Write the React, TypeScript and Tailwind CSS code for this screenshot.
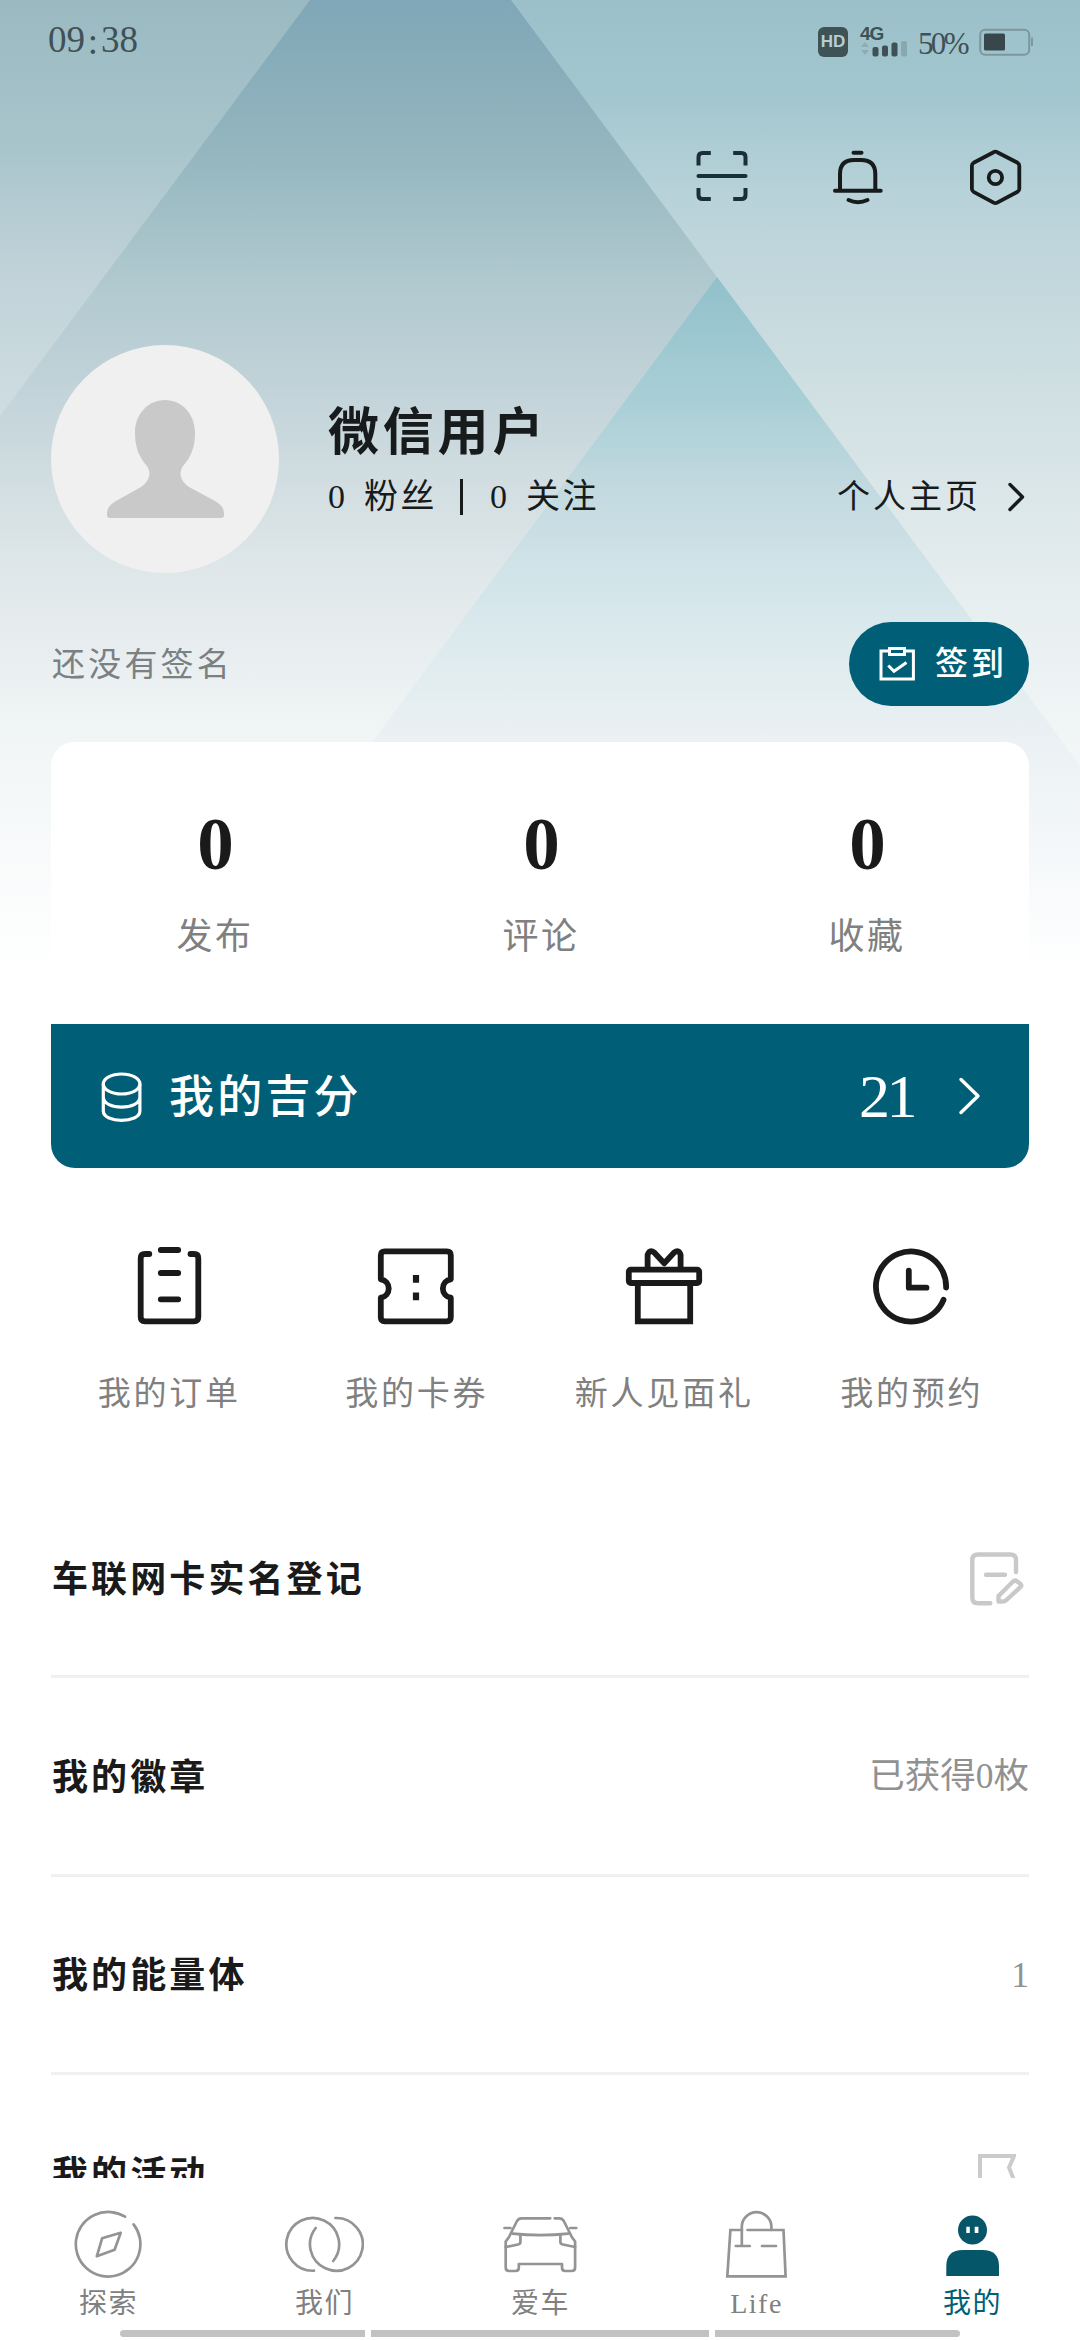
import type { ReactNode } from 'react'

interface Shortcut {
    label: string
    icon: ReactNode
}

interface MenuItem {
    label: string
    value: ReactNode
}

interface Tab {
    label: string
    icon: ReactNode
    active?: boolean
}

const stats = [
    { label: '发布', count: 0 },
    { label: '评论', count: 0 },
    { label: '收藏', count: 0 },
]

const shortcuts: Shortcut[] = [
    {
        label: '我的订单',
        icon: (
            <>
                <path d="M20.3 8H16Q11.7 8 11.7 12.3V71Q11.7 75.3 16 75.3H65Q69.3 75.3 69.3 71V12.3Q69.3 8 65 8H61.5" />
                <path d="M31.8 4H49.2M31.8 27H49.2M31.8 53.3H49.2" />
            </>
        ),
    },
    {
        label: '我的卡券',
        icon: (
            <>
                <path d="M4.8 33.3V9.3Q4.8 5.3 8.8 5.3H70.8Q74.8 5.3 74.8 9.3V33.3A9.3 9.3 0 0 0 74.8 51.7V71.3Q74.8 75.3 70.8 75.3H8.8Q4.8 75.3 4.8 71.3V51.7A9.3 9.3 0 0 0 4.8 33.3Z" />
                <path d="M40 29V36.8M40 46.4V54.2" strokeWidth="6.2" strokeLinecap="butt" />
            </>
        ),
    },
    {
        label: '新人见面礼',
        icon: (
            <>
                <rect x="4.8" y="23.7" width="70.4" height="13.3" rx="2" />
                <path d="M13.8 37V75.3H66.2V37" strokeLinecap="butt" strokeLinejoin="miter" />
                <path d="M23.6 23V9Q25.5 3 30 6.3L40.2 17.3L50.4 6.3Q55 3 56.6 9V23" />
            </>
        ),
    },
    {
        label: '我的预约',
        icon: (
            <>
                <path d="M75.1 41.5A35.1 35.1 0 1 0 72.5 53.8" />
                <path d="M37.8 24.7V41.7H55.5" />
            </>
        ),
    },
]

const menu: MenuItem[] = [
    {
        label: '车联网卡实名登记',
        value: (
            <svg className="mr-[3px] h-[60px] w-[60px]" viewBox="0 0 60 60" fill="none" stroke="#c9c9c9" strokeWidth="4.4" strokeLinecap="round" strokeLinejoin="round">
                <path d="M50 23V11Q50 5.5 44.5 5.5H12Q6.3 5.5 6.3 11V48.5Q6.3 54.3 12 54.3H24.3" />
                <path d="M20 25.7H39" />
                <path d="M32.5 52.5V47L46.5 33Q49 30.5 51.3 32.5L54.5 35Q56 36.5 54.3 38.2L40.5 51Q39 52.5 37 52.5Z" />
            </svg>
        ),
    },
    { label: '我的徽章', value: <span>已获得0枚</span> },
    { label: '我的能量体', value: <span>1</span> },
    {
        label: '我的活动',
        value: (
            <svg className="mt-2 mr-[13px] h-[52px] w-10" viewBox="0 0 40 52" fill="none" stroke="#cbcbcb" strokeWidth="4">
                <path d="M4 50V4H38L33 15.5L38 28H4" />
            </svg>
        ),
    },
]

const tabs: Tab[] = [
    {
        label: '探索',
        icon: (
            <>
                <path d="M57 6.7A32.3 32.3 0 1 0 65.6 14.4" />
                <path d="M52.7 22.7L34.1 28.3L28.8 46.3L46.6 39.7Z" />
            </>
        ),
    },
    {
        label: '我们',
        icon: (
            <>
                <path d="M30 60.7A26.4 26.4 0 1 1 49.2 51" />
                <path d="M51.4 8A26.4 26.4 0 1 1 31.7 18" />
            </>
        ),
    },
    {
        label: '爱车',
        icon: (
            <>
                <path d="M50.2 8.3H21.5Q18.5 8.3 17 11L9 27L5.7 31.5V57.5Q5.7 61 9.2 61H15.6Q18.8 61 18.8 57.5V54H62V57.5Q62 61 65.3 61H71.6Q75.1 61 75.1 57.5V31.5L71.8 27L63.8 11Q62.3 8.3 59.3 8.3H54.7" />
                <path d="M12.5 23.7Q40.4 26.7 68.3 23.7M4.5 18H10.5M70.3 18H76.3" />
                <path d="M20.4 25V32Q20.4 34 18 34.5L5.7 37M60.4 25V32Q60.4 34 62.8 34.5L75.1 37" />
            </>
        ),
    },
    {
        label: 'Life',
        icon: (
            <>
                <path d="M26 20H14.4L11.3 66.3H69.6L67.5 20H31.5" strokeLinejoin="miter" />
                <path d="M25.8 35.5V17A14.8 14.8 0 0 1 55.4 17V20M19.8 36H33.8M46 36H60" />
            </>
        ),
    },
    {
        label: '我的',
        active: true,
        icon: (
            <g fill="#06566a" stroke="none">
                <circle cx="40.5" cy="20" r="14.5" />
                <path d="M14.3 66V56Q14.3 40 31 40H50.4Q67 40 67 56V66Z" />
                <path d="M34.3 16.7H37.8V23H34.3ZM42.7 16.7H46.4V23H42.7Z" fill="#fff" />
            </g>
        ),
    },
]

function Backdrop() {
    return (
        <svg className="absolute top-0 left-0 h-[970px] w-[1080px]" viewBox="0 0 1080 970">
            <defs>
                <linearGradient id="sky" gradientUnits="userSpaceOnUse" x1="0" y1="0" x2="0" y2="970">
                    <stop offset="0" stopColor="#9bc0c9" />
                    <stop offset="0.1" stopColor="#a3c7cf" />
                    <stop offset="0.2" stopColor="#b8d2d9" />
                    <stop offset="0.4" stopColor="#cfdfe2" />
                    <stop offset="0.6" stopColor="#e5edee" />
                    <stop offset="0.77" stopColor="#f2f6f7" />
                    <stop offset="1" stopColor="#ffffff" />
                </linearGradient>
                <linearGradient id="left" gradientUnits="userSpaceOnUse" x1="0" y1="0" x2="0" y2="430">
                    <stop offset="0" stopColor="#9ab9c1" />
                    <stop offset="0.35" stopColor="#a9c5cc" />
                    <stop offset="0.65" stopColor="#c1d3d9" />
                    <stop offset="1" stopColor="#d0dee2" />
                </linearGradient>
                <linearGradient id="peak" gradientUnits="userSpaceOnUse" x1="0" y1="0" x2="0" y2="970">
                    <stop offset="0" stopColor="#7fa7b7" />
                    <stop offset="0.15" stopColor="#93b5be" />
                    <stop offset="0.29" stopColor="#b0c9cf" />
                    <stop offset="0.41" stopColor="#c3d4da" />
                    <stop offset="0.52" stopColor="#d5e0e3" />
                    <stop offset="0.62" stopColor="#e3eaec" />
                    <stop offset="0.77" stopColor="#f2f6f7" />
                    <stop offset="1" stopColor="#ffffff" />
                </linearGradient>
                <linearGradient id="foothill" gradientUnits="userSpaceOnUse" x1="0" y1="277" x2="0" y2="970">
                    <stop offset="0" stopColor="#91c0cb" />
                    <stop offset="0.18" stopColor="#a9cfd6" />
                    <stop offset="0.3" stopColor="#c1d9df" />
                    <stop offset="0.42" stopColor="#d0e3e8" />
                    <stop offset="0.54" stopColor="#deebee" />
                    <stop offset="0.67" stopColor="#ebf1f4" />
                    <stop offset="1" stopColor="#ffffff" />
                </linearGradient>
            </defs>
            <rect width="1080" height="970" fill="url(#sky)" />
            <path d="M0 0H310L0 416Z" fill="url(#left)" />
            <path d="M310 0H511L1232 970H0V416Z" fill="url(#peak)" />
            <path d="M717 277L1232 970H203Z" fill="url(#foothill)" />
        </svg>
    )
}

function StatusBar() {
    return (
        <div className="relative flex h-21 shrink-0 items-center justify-between pr-12 pl-12 text-[#3f5156]">
            <div className="-mt-1 flex text-[37px] leading-none">
                <span>09</span>
                <span className="w-4 pt-0.5 text-center">:</span>
                <span>38</span>
            </div>
            <div className="flex items-center">
                <div className="flex h-[30px] w-[30px] items-center justify-center rounded-md bg-[#3f5357] font-['Liberation_Sans'] text-[17px] font-bold text-[#b4cfd4]">
                    HD
                </div>
                <div className="ml-3 flex h-8 w-[48px] flex-col">
                    <span className="h-[15px] font-['Liberation_Sans'] text-[19px] leading-[16px] font-bold tracking-[-1px]">4G</span>
                    <svg className="h-[17px] w-12" viewBox="0 0 48 17">
                        <path d="M1 6L5 1L9 6ZM1 9L5 14L9 9Z" fill="#8eacb2" />
                        <rect x="12.5" y="6" width="6" height="9.5" rx="2" fill="#3f5156" />
                        <rect x="22" y="4.5" width="6" height="11" rx="2" fill="#3f5156" />
                        <rect x="31.5" y="1.5" width="6" height="14" rx="2" fill="#3f5156" />
                        <rect x="41" y="0" width="6" height="15.5" rx="2" fill="#87a8ae" />
                    </svg>
                </div>
                <span className="ml-2.5 pt-0.5 text-[31px] leading-none tracking-[-2.6px]">50%</span>
                <svg className="-mr-0.5 ml-3 h-7 w-[55px]" viewBox="0 0 55 28" fill="none">
                    <rect x="1.2" y="1.7" width="49" height="25" rx="5" stroke="#7c979d" strokeWidth="2" />
                    <rect x="5" y="5.5" width="21" height="17" rx="1.5" fill="#37474c" />
                    <path d="M53 9.5V18" stroke="#7c979d" strokeWidth="2" />
                </svg>
            </div>
        </div>
    )
}

function TopActions() {
    return (
        <div className="relative flex h-47 shrink-0 items-center justify-end gap-[85px] pr-[58px] text-[#171b1c]">
            <svg className="h-[58px] w-[52px]" viewBox="-0.5 -1 52 58" fill="none" stroke="#1b2f38" strokeWidth="4">
                <path d="M2 15.5V7Q2 3 6 3H14.3M36.7 3H45Q49 3 49 7V15.5M2 38V45Q2 49 6 49H14.3M36.7 49H45Q49 49 49 45V38" />
                <path d="M2 26H49" strokeLinecap="round" />
            </svg>
            <svg className="h-[58px] w-[52px]" viewBox="0 0 52 58" fill="none" stroke="currentColor" strokeWidth="4" strokeLinecap="round">
                <path d="M20.5 3.7H28.5M7 41.7V25Q7 11 21 11H28Q42.3 11 42.3 25V41.7M2 41.7H47.7M15.5 51Q25 55.5 34.5 51" />
            </svg>
            <svg className="h-[58px] w-[52px]" viewBox="0 0 52 58" fill="none" stroke="currentColor" strokeWidth="3.8" strokeLinejoin="round">
                <path d="M23.6 3.2Q25.4 2.2 27.2 3.2L47.6 13.8Q49.3 14.8 49.3 16.8V39.8Q49.3 41.8 47.6 42.8L27.2 53.6Q25.4 54.6 23.6 53.6L3.6 42.8Q1.9 41.8 1.9 39.8V16.8Q1.9 14.8 3.6 13.8Z" />
                <circle cx="25.4" cy="28.5" r="6.7" />
            </svg>
        </div>
    )
}

function Profile() {
    return (
        <div className="relative mt-[73px] flex h-[228px] shrink-0 px-[51px] text-[#171b1c]">
            <svg className="h-[228px] w-[228px] rounded-full bg-[#f0f0f0]" viewBox="0 0 228 228">
                <path d="M114 55C131 55 144 69 144 88C144 104 139 113 132 121C127 129 130 136 138 142L164 156Q173 161 173 168V170Q173 173 170 173H59Q56 173 56 170V168Q56 161 65 156L90 142C98 136 101 129 96 121C89 113 84 104 84 88C84 69 97 55 114 55Z" fill="#c9c9c9" />
            </svg>
            <div className="ml-[49px] flex flex-1 flex-col pt-[54px]">
                <h1 className="text-[51px] leading-[68px] font-bold tracking-[3.8px]">微信用户</h1>
                <div className="mt-2 flex h-11 items-center text-[34px] leading-[44px]">
                    <span>0</span>
                    <span className="ml-[19px] tracking-[2.5px]">粉丝</span>
                    <span className="ml-[23px] h-9 w-[3px] bg-[#171b1c]" />
                    <span className="ml-[27px]">0</span>
                    <span className="ml-[19px] tracking-[2.5px]">关注</span>
                    <div className="ml-auto flex items-center">
                        <span className="text-[33px] tracking-[3px]">个人主页</span>
                        <svg className="mr-0.5 ml-[26px] h-8 w-5" viewBox="0 0 20 32" fill="none" stroke="currentColor" strokeWidth="3.4" strokeLinecap="round" strokeLinejoin="round">
                            <path d="M3 3.5L15.5 16L3 28.5" />
                        </svg>
                    </div>
                </div>
            </div>
        </div>
    )
}

function Signature() {
    return (
        <div className="relative mt-[49px] flex h-21 shrink-0 items-center justify-between px-[51px]">
            <p className="pt-[3px] pl-px text-[33px] tracking-[3.2px] text-[#7b8082]">还没有签名</p>
            <button className="flex h-21 w-[180px] items-center rounded-full bg-[#005f77] pl-[29px] text-white">
                <svg className="h-[38px] w-[38px]" viewBox="0 0 38 38" fill="none" stroke="currentColor" strokeWidth="3">
                    <path d="M10.8 6H3V34H35.4V6H27.2M11.5 3.5H26.5V9.5H11.5Z" />
                    <path d="M10.3 20.5L16 26.3L28.5 17.5" />
                </svg>
                <span className="ml-[19px] pt-0.5 text-[33px] font-medium tracking-[3px]">签到</span>
            </button>
        </div>
    )
}

export default function App() {
    return (
        <div className="relative flex h-[2340px] w-[1080px] flex-col overflow-hidden bg-white font-['Liberation_Serif','Noto_Sans_CJK_SC',serif]">
            <Backdrop />

            <main className="relative flex h-[2178px] shrink-0 flex-col overflow-hidden">
                <StatusBar />
                <TopActions />
                <Profile />
                <Signature />

                <section className="mx-[51px] mt-9 shrink-0">
                    <div className="grid h-[282px] grid-cols-3 rounded-t-3xl bg-white">
                        {stats.map((stat) => (
                            <div key={stat.label} className="flex flex-col items-center pt-[65px]">
                                <span className="pl-[3px] text-[73px] leading-[76px] font-bold text-[#1a1a1a]">{stat.count}</span>
                                <span className="mt-[30px] pl-[2px] text-[36px] leading-[48px] tracking-[2.5px] text-[#808080]">{stat.label}</span>
                            </div>
                        ))}
                    </div>
                    <div className="flex h-36 items-center rounded-b-3xl bg-[#005f77] pr-11 pl-[49px] text-white">
                        <svg className="mt-0.5 h-[52px] w-11" viewBox="0 0 44 52" fill="none" stroke="currentColor" strokeWidth="3.2">
                            <ellipse cx="21.6" cy="13" rx="18.3" ry="10" />
                            <path d="M3.3 13V40C3.3 52.5 39.9 52.5 39.9 40V13M3.3 26C3.3 39.5 39.9 39.5 39.9 26" />
                        </svg>
                        <span className="ml-[25px] pt-1.5 text-[45px] font-medium tracking-[3.2px]">我的吉分</span>
                        <span className="ml-auto text-[62px] leading-none tracking-[-3.5px]">21</span>
                        <svg className="ml-[43px] h-10 w-7" viewBox="0 0 28 40" fill="none" stroke="currentColor" strokeWidth="3.4" strokeLinecap="round" strokeLinejoin="round">
                            <path d="M4 3.5L21 20L4 36.5" />
                        </svg>
                    </div>
                </section>

                <section className="mx-[45px] grid h-[312px] shrink-0 grid-cols-4 pt-[78px]">
                    {shortcuts.map((item) => (
                        <div key={item.label} className="flex flex-col items-center">
                            <svg className="h-20 w-20" viewBox="0 0 80 80" fill="none" stroke="#1a1a1a" strokeWidth="5.8" strokeLinecap="round" strokeLinejoin="round">
                                {item.icon}
                            </svg>
                            <span className="mt-[46px] pl-px text-[33px] leading-[44px] tracking-[2.8px] text-[#808080]">{item.label}</span>
                        </div>
                    ))}
                </section>

                <ul className="mx-[51px] shrink-0">
                    {menu.map((item) => (
                        <li key={item.label} className="flex h-[198.3px] items-center justify-between border-b-3 border-[#f0f0f0]">
                            <span className="pt-1 pl-px text-[36px] font-bold tracking-[3.1px] text-[#1a1a1a]">{item.label}</span>
                            <div className="pt-0.5 text-[35.5px] text-[#919191]">{item.value}</div>
                        </li>
                    ))}
                </ul>
            </main>

            <nav className="relative h-[162px] shrink-0 bg-white">
                <div className="grid grid-cols-5 pt-8">
                    {tabs.map((tab) => (
                        <div key={tab.label} className="flex flex-col items-center">
                            <svg className="h-[70px] w-20" viewBox="0 0 80 70" fill="none" stroke="#949494" strokeWidth="2.7" strokeLinecap="round" strokeLinejoin="round">
                                {tab.icon}
                            </svg>
                            <span className={`mt-[5px] pl-px text-[28px] leading-[38px] tracking-[1.5px] ${tab.active ? 'text-[#005f77]' : 'text-[#808080]'}`}>
                                {tab.label}
                            </span>
                        </div>
                    ))}
                </div>
                <div className="mx-[120px] mt-[7px] flex h-[7px] gap-1.5">
                    <div className="w-[245px] rounded-l-full bg-[#c2c2c2]" />
                    <div className="flex-1 bg-[#c2c2c2]" />
                    <div className="w-[245px] rounded-r-full bg-[#c2c2c2]" />
                </div>
            </nav>
        </div>
    )
}
